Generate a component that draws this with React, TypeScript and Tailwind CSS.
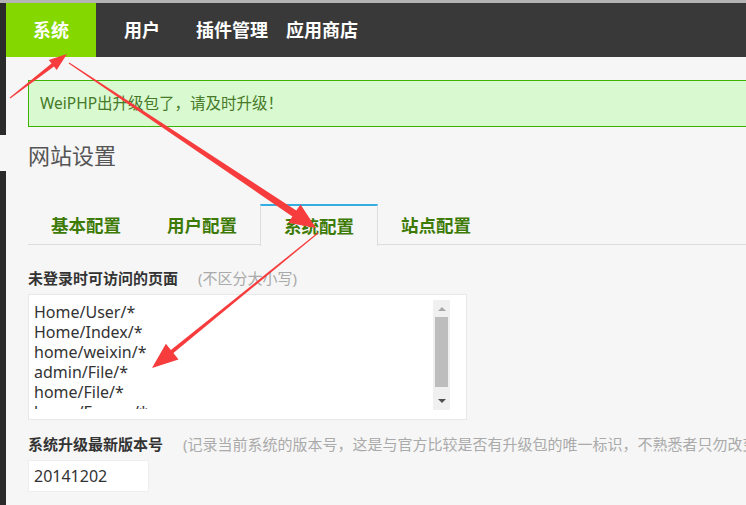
import React from 'react';

type Pt = [number, number];

// tapered red annotation arrow: thin tail, thicker shaft, triangle head
function arrowPoints(tail: Pt, tip: Pt, w0: number, w1: number, hl: number, hw: number) {
  const dx = tip[0] - tail[0];
  const dy = tip[1] - tail[1];
  const len = Math.hypot(dx, dy);
  const ux = dx / len;
  const uy = dy / len;
  const nx = -uy;
  const ny = ux;
  const bx = tip[0] - ux * hl;
  const by = tip[1] - uy * hl;
  const pts: Pt[] = [
    [tail[0] + (nx * w0) / 2, tail[1] + (ny * w0) / 2],
    [bx + (nx * w1) / 2, by + (ny * w1) / 2],
    [bx + (nx * hw) / 2, by + (ny * hw) / 2],
    tip,
    [bx - (nx * hw) / 2, by - (ny * hw) / 2],
    [bx - (nx * w1) / 2, by - (ny * w1) / 2],
    [tail[0] - (nx * w0) / 2, tail[1] - (ny * w0) / 2],
  ];
  return pts.map((p) => `${p[0].toFixed(1)},${p[1].toFixed(1)}`).join(' ');
}

const navItems = ['用户', '插件管理', '应用商店'];
const navGaps = ['ml-[28px]', 'ml-[36px]', 'ml-[18px]'];
const tabs = ['基本配置', '用户配置', '系统配置', '站点配置'];
const pages = ['Home/User/*', 'Home/Index/*', 'home/weixin/*', 'admin/File/*', 'home/File/*', 'home/Forum/*'];

function Annotations() {
  return (
    <svg className="pointer-events-none absolute left-0 top-0" width={746} height={505}>
      <polygon fill="#f63c3c" points={arrowPoints([10, 98], [67, 54], 1, 4, 18, 13)} />
      <polygon fill="#f63c3c" points={arrowPoints([69, 63], [316, 228], 1, 7, 26, 22)} />
      <polygon fill="#f63c3c" points={arrowPoints([318, 233], [152, 368], 1, 4, 26, 20)} />
    </svg>
  );
}

export default function App() {
  return (
    <div className="relative h-[505px] w-[746px] overflow-hidden bg-[#f6f6f6] font-['Noto_Sans','Noto_Sans_CJK_SC',sans-serif]">
      <div className="h-[3px] bg-[#b4b4b4]" />
      <div className="flex h-[502px]">
        {/* left dark strip with a gap */}
        <div className="flex w-[6px] flex-col">
          <div className="h-[132px] bg-[#2a2a2a]" />
          <div className="h-[36px]" />
          <div className="flex-1 bg-[#2a2a2a]" />
        </div>

        <div className="flex min-w-0 flex-1 flex-col overflow-hidden">
          {/* top nav */}
          <div className="flex h-[54px] items-center bg-[#393939] text-[18px] font-bold text-white">
            <div className="flex h-full w-[90px] items-center justify-center bg-[#84d800]">系统</div>
            {navItems.map((n, i) => (
              <div key={n} className={navGaps[i]}>
                {n}
              </div>
            ))}
          </div>

          <div className="pl-[22px]">
            {/* notice */}
            <div className="-mr-[20px] mt-[23px] flex h-[47px] items-center border border-[#3cb300] bg-[#d9f9d0] pl-[11px] text-[15.5px] text-[#467a28]">
              WeiPHP出升级包了，请及时升级！
            </div>

            <div className="mt-[13px] h-[30px] text-[22px] leading-[30px] text-[#555]">网站设置</div>

            {/* tabs */}
            <div className="mt-[34px] flex h-[41px] border-b border-[#dddddd]">
              {tabs.map((t, i) =>
                i === 2 ? (
                  <div
                    key={t}
                    className="-mb-px flex h-[42px] items-center border-x border-t-2 border-x-[#dddddd] border-t-[#35ade0] bg-[#f6f6f6] px-[23px] text-[17.5px] font-bold text-[#3d7a06]"
                  >
                    {t}
                  </div>
                ) : (
                  <div
                    key={t}
                    className="flex items-center px-[23px] pt-[2px] text-[17.5px] font-bold text-[#3d7a06]"
                  >
                    {t}
                  </div>
                ),
              )}
            </div>

            {/* allowed pages */}
            <div className="mt-[23px] flex h-[20px] items-center text-[15px] leading-[20px]">
              <span className="font-bold text-[#333]">未登录时可访问的页面</span>
              <span className="ml-[20px] text-[#aaa]">(不区分大小写)</span>
            </div>
            <div className="mt-[6px] flex h-[126px] w-[439px] items-start border border-[#e8e8e8] bg-white">
              <div className="h-[114px] flex-1 overflow-hidden pl-[5px] pt-[7px] text-[16px] leading-[20px] text-[#333]">
                {pages.map((p) => (
                  <div key={p} className="whitespace-nowrap">
                    {p}
                  </div>
                ))}
              </div>
              <div className="mr-[16px] mt-[5px] flex h-[110px] w-[17px] flex-col items-center bg-[#f0f0f0]">
                <div className="flex h-[17px] items-center justify-center">
                  <div className="h-0 w-0 border-x-[4px] border-b-[4px] border-x-transparent border-b-[#a8a8a8]" />
                </div>
                <div className="h-[70px] w-[13px] bg-[#bdbdbd]" />
                <div className="flex flex-1 items-center justify-center pt-[4px]">
                  <div className="h-0 w-0 border-x-[4px] border-t-[4px] border-x-transparent border-t-[#505050]" />
                </div>
              </div>
            </div>

            {/* version */}
            <div className="mt-[14px] flex h-[20px] items-center whitespace-nowrap text-[15px] leading-[20px]">
              <span className="font-bold text-[#333]">系统升级最新版本号</span>
              <span className="ml-[20px] text-[#aaa]">
                (记录当前系统的版本号，这是与官方比较是否有升级包的唯一标识，不熟悉者只勿改变其数值)
              </span>
            </div>
            <div className="mt-[6px] flex h-[32px] w-[121px] items-center border border-[#eee] bg-white pl-[5px] text-[16px] text-[#333]">
              20141202
            </div>
          </div>
        </div>
      </div>
      <Annotations />
    </div>
  );
}
